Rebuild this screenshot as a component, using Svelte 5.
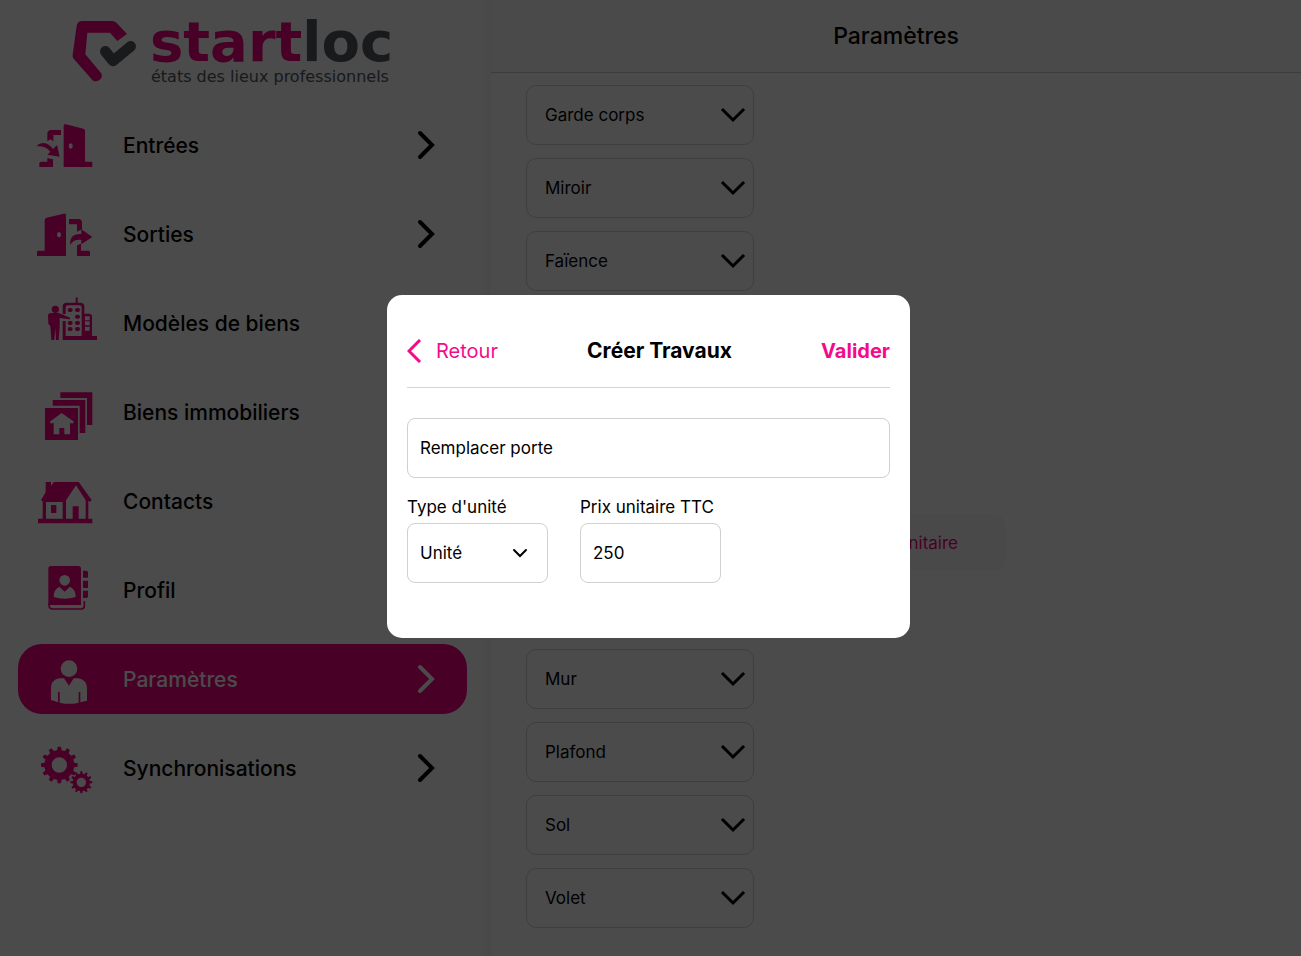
<script lang="ts">
  type NavItem = { id: string; label: string }

  const navItems: NavItem[] = [
    { id: 'entrees', label: 'Entrées' },
    { id: 'sorties', label: 'Sorties' },
    { id: 'modeles', label: 'Modèles de biens' },
    { id: 'biens', label: 'Biens immobiliers' },
    { id: 'contacts', label: 'Contacts' },
    { id: 'profil', label: 'Profil' },
    { id: 'parametres', label: 'Paramètres' },
    { id: 'sync', label: 'Synchronisations' },
  ]

  const groupsBefore = ['Garde corps', 'Miroir', 'Faïence']
  const groupsAfter = ['Mur', 'Plafond', 'Sol', 'Volet']

  let current = $state('parametres')
  let modalOpen = $state(true)
  let name = $state('Remplacer porte')
  let unit = $state('Unité')
  let price = $state('250')

  // outline of a toothed wheel, two points on the rim and two at the root per tooth
  function gear(cx: number, cy: number, outer: number, root: number, teeth: number): string {
    const step = (Math.PI * 2) / teeth
    const points: string[] = []
    for (let i = 0; i < teeth; i++) {
      const a = i * step - Math.PI / 2
      const corners = [
        [root, -0.28],
        [outer, -0.17],
        [outer, 0.17],
        [root, 0.28],
      ]
      for (const [r, o] of corners) {
        points.push(`${(cx + r * Math.cos(a + o * step)).toFixed(1)} ${(cy + r * Math.sin(a + o * step)).toFixed(1)}`)
      }
    }
    return `M${points.join('L')}Z`
  }

  const bigGear = gear(148, 375, 55, 45, 12) + 'M171 375a23 23 0 1 0-46 0a23 23 0 1 0 46 0Z'
  const smallGear = gear(214, 427, 33, 26, 12) + 'M228 427a14 14 0 1 0-28 0a14 14 0 1 0 28 0Z'

  function close(): void {
    modalOpen = false
  }
</script>

{#snippet navIcon(id: string)}
  {#if id === 'entrees'}
    <svg class="nav-icon" viewBox="45 30 180 150" aria-hidden="true">
      <path d="M131 47q0-5 7-4l52 13q5 1 5 6v93h18q4 0 4 4v12h-86z" />
      <ellipse class="hole" cx="152" cy="108" rx="6" ry="8" />
      <path d="M123 60v15h-23v20l-7-7-11 5V72q0-12 12-12z" />
      <path d="M52 105q18-11 34-1q8 5 13 13l12-12 8 35-37-6 9-9q-14-17-39-16z" />
      <path d="M82 144l17 4v23H58v-11q0-5 5-5h19z" />
    </svg>
  {:else if id === 'sorties'}
    <svg class="nav-icon" viewBox="45 297 180 150" aria-hidden="true">
      <path d="M138 315q0-6-7-4l-51 12q-6 2-6 7v92H55q-4 0-4 4v12h87z" />
      <ellipse class="hole" cx="117" cy="374" rx="6" ry="8" />
      <path d="M147 327h28q11 0 11 12v19l-15 7v-22h-24z" />
      <path d="M150 405q-1-36 34-33v-14l33 23-33 22v-13q-23-3-34 15z" />
      <path d="M171 406l12-5v21h22q5 0 5 5v11h-39z" />
    </svg>
  {:else if id === 'modeles'}
    <svg class="nav-icon" viewBox="45 39 180 150" aria-hidden="true">
      <circle cx="106" cy="73" r="11" />
      <path d="M84 92q0-8 10-8h22l22 9 12 5v5l-26-3-5-2v28l-3 39h-8l-2-36-3 36h-9l-3-41-6-8z" />
      <path
        fill-rule="evenodd"
        d="M128 88V64q0-11 12-11h27v-14q3-5 6 0v14h8q12 0 12 11v22h14q9 0 9 9v58h15v12H128v-57h9v45h48V67q0-6-6-6h-36q-6 0-6 6v20zM195 94v12h14V94zM195 109v12h14v-12zM195 125v12h14v-12z"
      />
      <g class="windows">
        <path d="M149 75h3M171 75h3M171 95h3M149 114h3M171 114h3M149 132h3M171 132h3" />
      </g>
    </svg>
  {:else if id === 'biens'}
    <svg class="nav-icon" viewBox="45 306 180 150" aria-hidden="true">
      <path d="M121 322h96v98h-16v-81h-80z" />
      <path d="M98 345h98v99h-17v-82H98z" />
      <path d="M75 369h99v96H75z" />
      <path class="hole" d="M125 384l37 26-5 6-7-3v35h-17v-19h-15v19h-17v-35l-7 3-5-6z" />
    </svg>
  {:else if id === 'contacts'}
    <svg class="nav-icon" viewBox="45 33 180 150" aria-hidden="true">
      <path d="M77 51h16v11l9-11h74l39 54-5 5-5-3v54h12v14H54v-14h14v-52l-5-3 14-25z" />
      <path class="hole" d="M78 111h50v50H78zM168 61l29 45v55h-21v-37h-18v37h-20v-55z" />
      <path d="M93 120h16v24H93z" />
    </svg>
  {:else if id === 'profil'}
    <svg class="nav-icon" viewBox="45 300 180 150" aria-hidden="true">
      <path d="M93 303h82q8 0 8 8v109H85V311q0-8 8-8z" />
      <path class="line" d="M87 415v4q0 13 12 13h85q9 0 9-9v-15" />
      <path class="gap" d="M94 423h88" />
      <path d="M189 317h10q5 0 5 5v16h-15zM189 347h15v22h-15zM189 377h15v17q0 5-5 5h-10z" />
      <circle class="hole" cx="134" cy="346" r="16" />
      <path class="hole" d="M118 365l16 15 16-15q17 8 17 31q-33 11-66 0q0-23 17-31z" />
    </svg>
  {:else if id === 'parametres'}
    <svg class="nav-icon" viewBox="75 42 180 150" aria-hidden="true">
      <circle cx="177" cy="86" r="25" />
      <path d="M123 145q0-25 24-30h15l15 22 14-22h15q24 5 25 30v37l-20 5v-31h-5v32q-28 7-57 0v-32h-5v31l-21-7z" />
    </svg>
  {:else}
    <svg class="nav-icon" viewBox="75 309 180 150" aria-hidden="true">
      <path fill-rule="evenodd" d={bigGear} />
      <path fill-rule="evenodd" d={smallGear} />
    </svg>
  {/if}
{/snippet}

{#snippet groupButton(label: string)}
  <button type="button" class="group" aria-expanded="false">
    <span>{label}</span>
    <svg viewBox="0 0 26 18" aria-hidden="true"><path d="M3 4l10 10L23 4" /></svg>
  </button>
{/snippet}

<div class="app">
  <aside class="sidebar">
    <svg class="logo" viewBox="0 -18 345 110" role="img" aria-label="startloc">
      <g transform="scale(0.3333) translate(-36 -24)">
        <path
          class="logo-pink"
          d="M50 48q2-15 18-15h88q8 0 14 6l31 33-29 21-22-25H82l-6 65 47 56q6 10-2 19q-9 9-22 4L41 146q-4-5-3-12z"
        />
        <path class="logo-check" d="M136 124l23 29 53-44" />
      </g>
      <text class="logo-name" x="78" y="43">start<tspan class="logo-grey">loc</tspan></text>
      <text class="logo-tagline" x="79" y="64">états des lieux professionnels</text>
    </svg>

    <nav>
      {#each navItems as item (item.id)}
        <button type="button" class="nav-item" class:active={item.id === current} onclick={() => (current = item.id)}>
          {@render navIcon(item.id)}
          <span class="nav-label">{item.label}</span>
          <svg class="nav-arrow" viewBox="0 0 18 30" aria-hidden="true"><path d="M3 3l12 12L3 27" /></svg>
        </button>
      {/each}
    </nav>
  </aside>

  <main>
    <header class="page-header"><h1>Paramètres</h1></header>
    <div class="groups">
      {#each groupsBefore as group}
        {@render groupButton(group)}
      {/each}
      <div class="panel">
        <button type="button" class="tab">Prix unitaire</button>
      </div>
      {#each groupsAfter as group}
        {@render groupButton(group)}
      {/each}
    </div>
  </main>
</div>

{#if modalOpen}
  <div class="backdrop">
    <div class="dialog" role="dialog" aria-modal="true" aria-labelledby="dialog-title">
      <div class="dialog-header">
        <button type="button" class="back" onclick={close}>
          <svg viewBox="0 0 15 24" aria-hidden="true"><path d="M13 1L2 12l11 11" /></svg>
          Retour
        </button>
        <h2 id="dialog-title">Créer Travaux</h2>
        <button type="button" class="submit" onclick={close}>Valider</button>
      </div>

      <input class="control" type="text" aria-label="Travaux" bind:value={name} />

      <div class="fields">
        <div class="field">
          <label for="unit">Type d'unité</label>
          <div class="select-wrap">
            <select id="unit" class="control" bind:value={unit}>
              <option>Unité</option>
            </select>
            <svg viewBox="0 0 16 10" aria-hidden="true"><path d="M2 2l6 6 6-6" /></svg>
          </div>
        </div>
        <div class="field">
          <label for="price">Prix unitaire TTC</label>
          <input id="price" class="control" type="text" inputmode="decimal" bind:value={price} />
        </div>
      </div>
    </div>
  </div>
{/if}

<style>
  :global(body) {
    margin: 0;
    font-family: Inter, 'Liberation Sans', sans-serif;
    color: #000;
  }

  button,
  input,
  select {
    font: inherit;
    color: inherit;
  }

  button {
    border: 0;
    padding: 0;
    background: none;
    cursor: pointer;
  }

  .app {
    display: grid;
    grid-template-columns: minmax(320px, 491fr) 810fr;
    min-height: 100vh;
    background: #fbfbfb;
  }

  .sidebar {
    box-sizing: border-box;
    padding: 0 24px 18px 18px;
    background: linear-gradient(to left, #f4f4f4, #fafafa 10px);
  }

  .logo {
    display: block;
    width: 345px;
    max-width: 100%;
    margin-left: 54px;
  }

  .logo-pink {
    fill: #f0007f;
  }

  .logo-check {
    fill: none;
    stroke: #54585c;
    stroke-width: 32;
    stroke-linecap: round;
    stroke-linejoin: round;
  }

  .logo-name {
    font-family: 'DejaVu Sans', sans-serif;
    font-size: 56px;
    font-weight: 700;
    fill: #f0007f;
  }

  .logo-grey {
    fill: #54585c;
  }

  .logo-tagline {
    font-family: 'DejaVu Sans', sans-serif;
    font-size: 16px;
    fill: #54585c;
  }

  nav {
    display: grid;
    gap: 19px;
  }

  .nav-item {
    display: flex;
    align-items: center;
    height: 70px;
    padding: 0 32px 0 17px;
    border-radius: 24px;
    background: #fcfcfc;
    text-align: left;
  }

  .nav-icon {
    flex: none;
    width: 60px;
    height: 50px;
    margin-right: 28px;
    overflow: visible;
    fill: #f0007f;
  }

  .hole {
    fill: #fcfcfc;
  }

  .line {
    fill: none;
    stroke: #f0007f;
    stroke-width: 5;
  }

  .gap {
    stroke: #fcfcfc;
    stroke-width: 5;
  }

  .windows {
    fill: none;
    stroke: #f0007f;
    stroke-width: 12;
    stroke-linecap: round;
  }

  .nav-label {
    flex: 1;
    font-size: 21px;
    font-weight: 500;
  }

  .nav-arrow {
    width: 18px;
    height: 30px;
    fill: none;
    stroke: currentColor;
    stroke-width: 4;
    stroke-linecap: round;
  }

  .active {
    background: #f0007f;
    color: #fcfcfc;
  }

  .active .nav-icon {
    fill: #fcfcfc;
  }

  .page-header {
    display: flex;
    align-items: center;
    justify-content: center;
    height: 72px;
    border-bottom: 1px solid #c8c8c8;
    background: #f8f8f8;
  }

  h1 {
    margin: 0;
    font-size: 23px;
    font-weight: 500;
  }

  .groups {
    display: flex;
    flex-direction: column;
    align-items: flex-start;
    gap: 13px;
    padding: 12px 35px 24px;
  }

  .group {
    display: flex;
    align-items: center;
    justify-content: space-between;
    box-sizing: border-box;
    width: 228px;
    height: 60px;
    padding: 0 7px 0 18px;
    border: 1px solid #d0d0d0;
    border-radius: 10px;
    font-size: 17px;
  }

  .group svg {
    width: 26px;
    height: 18px;
    fill: none;
    stroke: #000;
    stroke-width: 3;
    stroke-linecap: square;
  }

  .panel {
    display: flex;
    justify-content: flex-end;
    box-sizing: border-box;
    width: 480px;
    padding: 211px 0 65px;
  }

  .tab {
    height: 56px;
    padding: 0 48px;
    border-radius: 12px;
    background: #f6f6f6;
    color: #f0007f;
    font-size: 17px;
  }

  .backdrop {
    position: fixed;
    inset: 0;
    display: flex;
    align-items: center;
    justify-content: center;
    box-sizing: border-box;
    padding: 0 4px 24px 0;
    background: rgba(0, 0, 0, 0.7);
  }

  .dialog {
    box-sizing: border-box;
    width: 523px;
    max-width: 94vw;
    padding: 20px 20px 55px;
    border-radius: 15px;
    background: #fff;
  }

  .dialog-header {
    display: flex;
    align-items: center;
    justify-content: space-between;
    height: 72px;
    margin-bottom: 30px;
    border-bottom: 1px solid #d5d5d5;
  }

  h2 {
    margin: 0;
    font-size: 21px;
    font-weight: 700;
  }

  .back,
  .submit {
    color: #f50a8c;
    font-size: 20px;
  }

  .back {
    display: flex;
    align-items: center;
    gap: 14px;
  }

  .back svg {
    width: 15px;
    height: 24px;
    fill: none;
    stroke: currentColor;
    stroke-width: 3;
  }

  .submit {
    font-weight: 700;
  }

  .control {
    display: block;
    box-sizing: border-box;
    width: 100%;
    height: 60px;
    padding: 0 12px;
    border: 1px solid #d0d0d0;
    border-radius: 8px;
    background: #fff;
    font-size: 17px;
  }

  select.control {
    appearance: none;
  }

  .fields {
    display: flex;
    flex-wrap: wrap;
    gap: 32px;
    margin-top: 19px;
  }

  .field {
    width: 141px;
  }

  label {
    display: block;
    margin-bottom: 6px;
    font-size: 17px;
    line-height: 20px;
    white-space: nowrap;
  }

  .select-wrap {
    position: relative;
  }

  .select-wrap svg {
    position: absolute;
    top: 25px;
    right: 20px;
    width: 16px;
    height: 10px;
    fill: none;
    stroke: #000;
    stroke-width: 2;
    stroke-linecap: round;
    pointer-events: none;
  }
</style>
